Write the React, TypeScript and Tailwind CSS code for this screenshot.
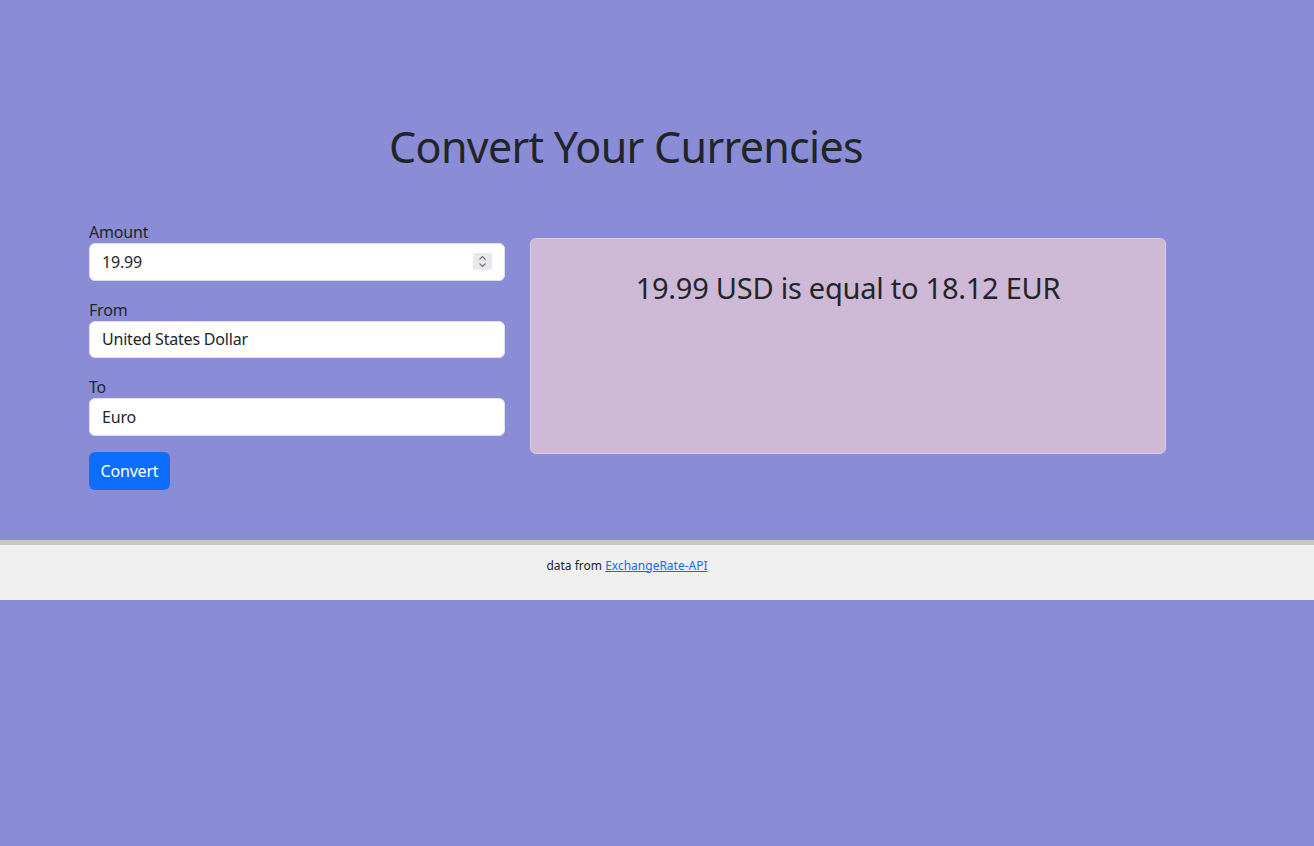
import React from 'react';

const font = { fontFamily: '"Noto Sans", "Open Sans", sans-serif' };

const Field = ({ label, value, spinner }: { label: string; value: string; spinner?: boolean }) => {
  return (
    <div className="mb-4">
      <label className="block h-6 pt-[1px] text-[16px] leading-6 tracking-[-0.2px] text-[#212529]">{label}</label>
      <div className="flex h-[37.5px] items-center justify-between rounded-[6px] border border-[#dee2e6] bg-white px-3 text-[16px] tracking-[-0.2px] text-[#212529]">
        <span>{value}</span>
        {spinner && (
          <span className="flex h-[17px] w-[19px] items-center justify-center rounded-[2px] bg-[#e9e9ed]">
            <svg width="9" height="13" viewBox="0 0 9 13" fill="none" stroke="#6b6b75" strokeWidth="1.1">
              <path d="M1.5 4.5 L4.5 1.5 L7.5 4.5" />
              <path d="M1.5 8.5 L4.5 11.5 L7.5 8.5" />
            </svg>
          </span>
        )}
      </div>
    </div>
  );
};

const App = () => {
  return (
    <div className="min-h-[846px] bg-[#8b8cd6]" style={font}>
      <section className="pt-[120px] pb-[50px]">
        <h1 className="pr-[62px] text-center text-[43px] leading-[54px] tracking-[-0.7px] text-[#212529]">Convert Your Currencies</h1>
        <div className="mt-[45px] flex gap-[25px] pl-[89px]">
          <div className="w-[416px]">
            <Field label="Amount" value="19.99" spinner />
            <Field label="From" value="United States Dollar" />
            <Field label="To" value="Euro" />
            <button className="h-[38px] w-[81px] rounded-[6px] bg-[#0d6efd] text-[16px] tracking-[-0.2px] text-white">Convert</button>
          </div>
          <div className="mt-[19px] h-[216px] w-[636px] rounded-[6px] border border-[#dccbe2] bg-[#cdb8d6] pt-[31px] text-center">
            <h2 className="text-[29px] leading-9 tracking-[-0.25px] text-[#212529]">19.99 USD is equal to 18.12 EUR</h2>
          </div>
        </div>
      </section>
      <footer className="h-[60px] border-t-[5px] border-[#c8c8c8] bg-[#f0f0f0] pt-[12px] pr-[60px] text-center text-[12px] text-[#212529]">
        data from{' '}
        <a href="#" className="text-[#0d6efd] underline">
          ExchangeRate-API
        </a>
      </footer>
    </div>
  );
};

export default App;
